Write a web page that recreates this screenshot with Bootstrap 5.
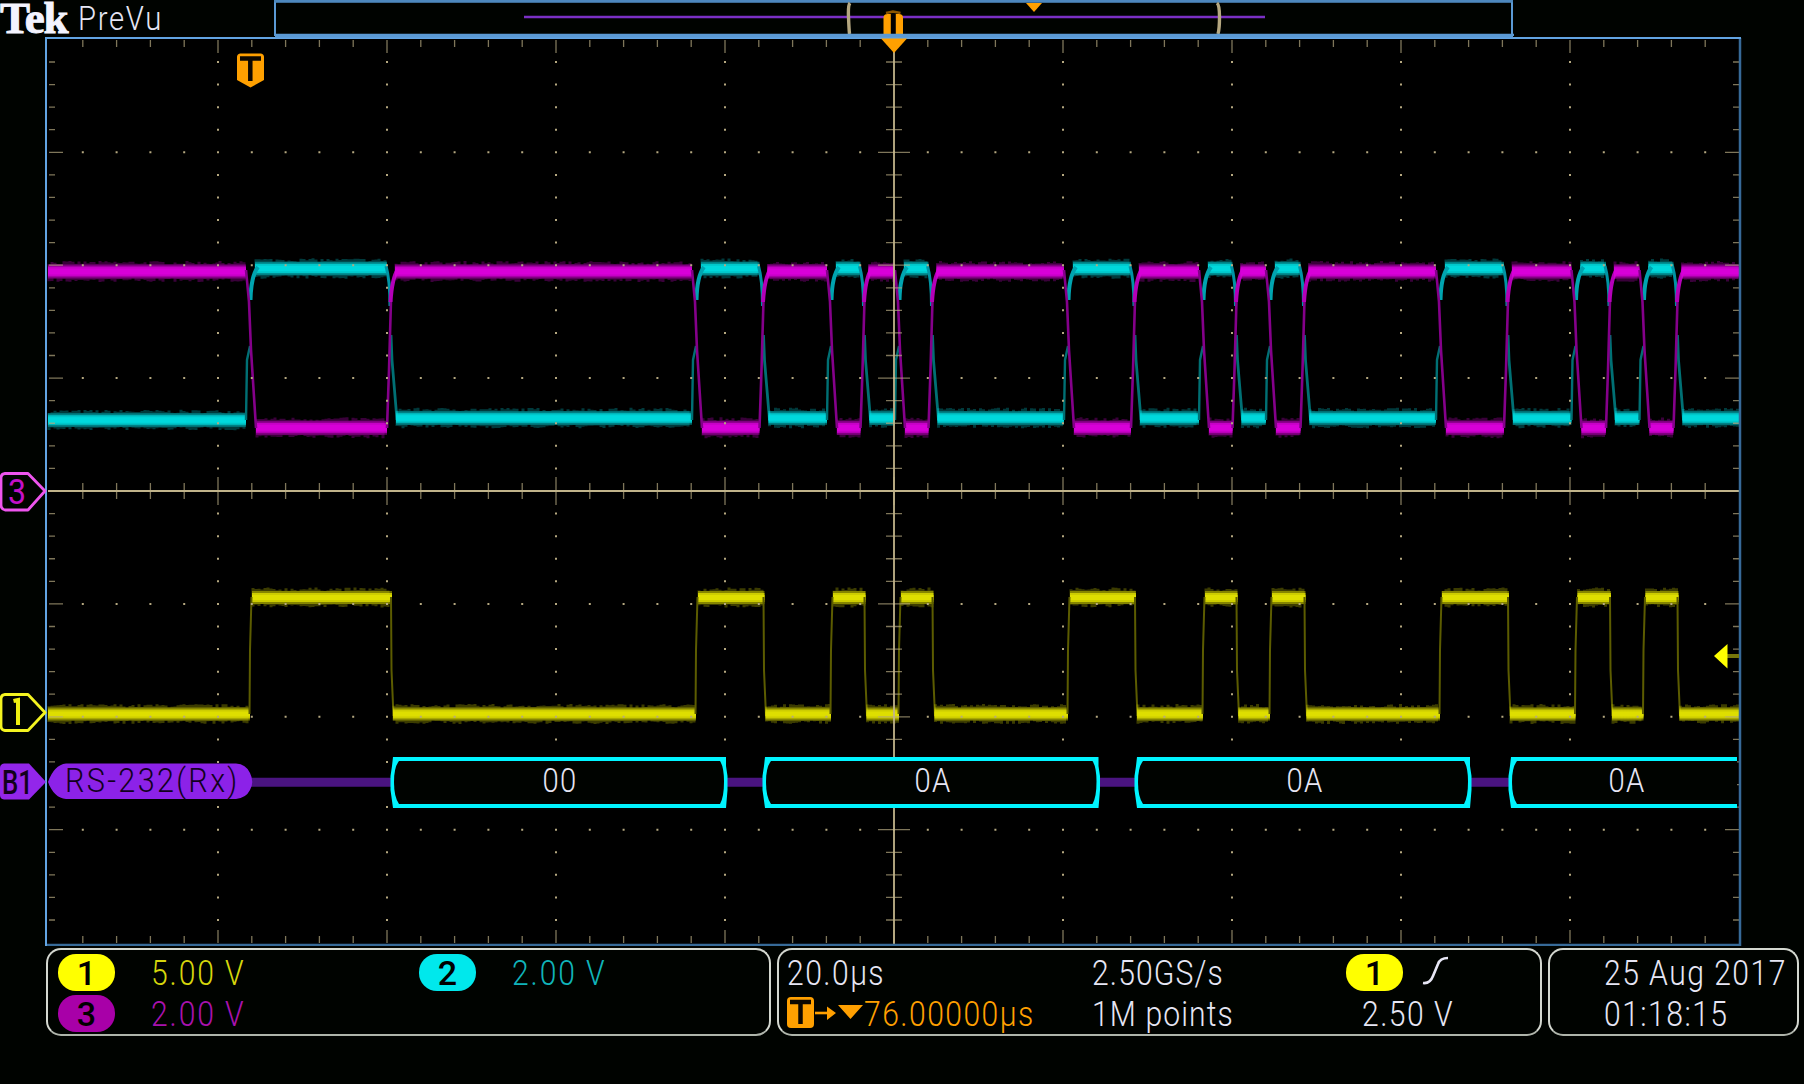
<!DOCTYPE html>
<html lang="en">
<head>
    <meta charset="UTF-8">
    <meta name="viewport" content="width=device-width, initial-scale=1.0">
    <title>Tek PreVu</title>
    <link href="https://cdn.jsdelivr.net/npm/bootstrap@5.3.0/dist/css/bootstrap.min.css" rel="stylesheet">
    <style>
        body { background: #000300; color: #e6e6f4; font-family: Roboto, "Liberation Sans", sans-serif; font-weight: 300; }
        svg { display: block; }
        svg text { font-family: Roboto, "Liberation Sans", sans-serif; }
        .scope { width: 1804px; height: 1084px; }
        .topbar { height: 36px; }
        .brand { width: 78px; font: bold 45px/37px "Liberation Serif", serif; letter-spacing: -1.2px; color: #f4f4ff; -webkit-text-stroke: 1px #f4f4ff; }
        .mode { width: 196px; font-size: 34px; line-height: 36px; }
        .readouts { margin: 2px 4px 0 46px; gap: 6px; height: 88px; }
        .panel { border: 2.5px solid #d4d8d0; border-bottom-color: #aeb4aa; border-radius: 15px; }
        .line { height: 41px; font-size: 35px; line-height: 39px; white-space: pre; }
        /* narrow instrument lettering */
        .lcd { display: inline-block; transform: scaleX(.86); transform-origin: left; letter-spacing: 1.7px; }
        .chan { width: 57px; height: 37px; border-radius: 18px; color: #000; font-weight: 500; font-size: 34px; line-height: 39px; text-align: center; }
        .ch1 { color: #d6d60c; } .ch2 { color: #10b4ba; } .ch3 { color: #a812ae; }
        .bg1 { background: #ffff00; } .bg2 { background: #00e8ec; } .bg3 { background: #a800a8; }
        .p-vert { width: 725px; padding: 4px 0 0 10px; }
        .p-horiz { width: 765px; padding: 4px 0 0 8px; }
        .p-date { width: 251px; padding: 4px 0 0 54px; }
        .slot { width: 361px; }
        .val { margin-left: 36px; letter-spacing: 2.2px; }
        .mode .lcd { letter-spacing: 2px; }
        .c-time { width: 305px; }
        .c-rate { width: 254px; }
        .c-rate .lcd { letter-spacing: 1.3px; }
        .orange { color: #ffa000; }
    </style>
</head>
<body>
<div class="scope d-flex flex-column overflow-hidden">
    <header class="topbar d-flex">
        <div class="brand">Tek</div>
        <div class="mode"><span class="lcd">PreVu</span></div>
        <svg width="1240" height="36" viewBox="274 0 1240 36">
            <rect x="275" y="1.5" width="1237" height="40" fill="#000300" stroke="#5b9ad4" stroke-width="2"/>
            <path d="M274 1.2H1513" stroke="#4d88bd" stroke-width="2.4"/>
            <path d="M524 17H1265" stroke="#7a30c4" stroke-width="2.4"/>
            <path d="M850 3Q848 5 848.500 17T849.500 34M1217 3Q1219.500 5 1219.500 17T1218 34" fill="none" stroke="#b5a880" stroke-width="3.400"/>
            <path d="M1026 3H1042L1034 12Z" fill="#ffa000"/>
            <rect x="883.500" y="14" width="19.500" height="24" rx="4" fill="#ffa000"/>
            <path d="M893.300 14V35" stroke="#000" stroke-width="5"/>
            <path d="M886 13L893 11.500 900.500 13" fill="none" stroke="#8a5600" stroke-width="2.500"/>
            <path d="M274 35H1514" stroke="#5b9ad4" stroke-width="2.4"/>
        </svg>
    </header>

    <svg id="plot" width="1804" height="910" viewBox="0 36 1804 910">
        <rect x="46" y="37.500" width="1693.500" height="907.500" fill="#000"/>
        <g id="traces" fill="none"></g>
        <g id="grid" stroke="#b5a880"></g>
        <path d="M1740 38V945H46" fill="none" stroke="#376a98" stroke-width="2.500"/>
        <path d="M46 946V38H1741" fill="none" stroke="#62a4e2" stroke-width="2"/>
        <path d="M275 36.500H1513" stroke="#5b9ad4" stroke-width="2"/>

        <!-- trigger markers -->
        <path d="M881 38.500H907L894 53Z" fill="#ffa000"/>
        <path d="M240 53.500H261Q264 54 264 57V80L250.500 87.500 237 80V57Q237 54 240 53.500Z" fill="#ffa000"/>
        <path d="M240 58.500H261M250.300 58V81" stroke="#0c0700" stroke-width="4.500"/>
        <path d="M1727 656H1739" stroke="#77770a" stroke-width="4"/>
        <path d="M1714 656L1727.500 644V668.500Z" fill="#ffff00"/>

        <!-- channel handles -->
        <g stroke-width="2.800" stroke-linejoin="round" fill="#000300">
            <path d="M5 473.500H28L45 491 28 510H5Q1 509 1 505V478Q1 474 5 473.500Z" stroke="#ee55ee"/>
            <path d="M5 694.500H28L45 712.500 28 730.500H5Q1 730 1 726V699Q1 695 5 694.500Z" stroke="#f4f420"/>
        </g>
        <path d="M4 763.500H29L46 782 29 799.500H4Q0 799 0 795V768Q0 764 4 763.500Z" fill="#9326ea"/>
        <text x="8" y="504" font-size="35" font-weight="400" textLength="18" lengthAdjust="spacingAndGlyphs" fill="#c410c8">3</text>
        <path d="M13.500 701L18 700V725" stroke="#f0f010" stroke-width="4" fill="none"/>
        <text x="2" y="794" font-size="34" font-weight="500" textLength="31" lengthAdjust="spacingAndGlyphs" fill="#12001c">B1</text>

        <!-- serial bus lane -->
        <path d="M250 782.300H1737" stroke="#4a1480" stroke-width="9"/>
        <path d="M66 763.500H236Q246 764 250 773Q254.500 782 250 790Q246 798 236 799H66Q54 798 48 782Q54 765 66 763.500Z" fill="#8c22e8"/>
        <text transform="translate(65 792) scale(.9 1)" font-size="34" letter-spacing="2.6" fill="#12001e">RS-232(Rx)</text>
        <g id="bus"></g>
    </svg>

    <footer class="readouts d-flex">
        <div class="panel p-vert">
            <div class="line d-flex">
                <div class="slot d-flex flex-shrink-0"><span class="chan bg1">1</span><span class="val ch1 lcd">5.00 V</span></div>
                <div class="d-flex"><span class="chan bg2">2</span><span class="val ch2 lcd">2.00 V</span></div>
            </div>
            <div class="line d-flex">
                <span class="chan bg3">3</span><span class="val ch3 lcd">2.00 V</span>
            </div>
        </div>
        <div class="panel p-horiz">
            <div class="line d-flex">
                <span class="c-time"><span class="lcd">20.0µs</span></span>
                <span class="c-rate"><span class="lcd">2.50GS/s</span></span>
                <span class="chan bg1">1</span>
                <svg width="60" height="41" viewBox="0 0 60 41"><path d="M20 29Q27 30 30 22L35 10Q37 4 45 4" fill="none" stroke="#e6e6f4" stroke-width="2.600"/></svg>
            </div>
            <div class="line d-flex">
                <span class="c-time d-flex orange">
                    <svg class="flex-shrink-0" width="77" height="41" viewBox="0 0 77 41">
                        <rect x="0" y="2" width="27" height="31" rx="4" fill="#ffa000"/>
                        <path d="M3 7H24M13.500 7V29" stroke="#0c0700" stroke-width="4.500"/>
                        <path d="M28 18H42" stroke="#ffa000" stroke-width="2.600"/>
                        <path d="M40 11.500L49 18 40 25Z M51 10H76L63.500 24Z" fill="#ffa000"/>
                    </svg><span class="lcd">76.00000µs</span></span>
                <span class="c-rate"><span class="lcd">1M points</span></span>
                <span class="ms-3"><span class="lcd">2.50 V</span></span>
            </div>
        </div>
        <div class="panel p-date">
            <div class="line"><span class="lcd">25 Aug 2017</span></div>
            <div class="line"><span class="lcd">01:18:15</span></div>
        </div>
    </footer>
</div>

<script>
    const X0 = 49, CX = 894, CY = 491, DX = 33.8, DY = 22.58;

    // graticule: dots on the division lines, ticks on the axes and the frame
    function grid() {
        let dots = '', ticks = '';
        for (let i = -24; i <= 24; i++) {
            const x = CX + i * DX, major = i % 5 === 0;
            const t = major ? 13 : 7;
            ticks += `M${x} 40V${40 + t}M${x} 943V${943 - t}M${x} ${CY - t - 1}V${CY + t + 1}`;
            for (let r = -3; r <= 3; r++) if (r) dots += `M${x - 1} ${CY + r * DY * 5}h2`;
        }
        for (let j = -19; j <= 19; j++) {
            const y = CY + j * DY, major = j % 5 === 0;
            const t = major ? 14 : 6;
            ticks += `M${X0} ${y}h${t}M1739 ${y}h${-t}M${CX - t - 2} ${y}h${2 * t + 4}`;
            for (let c = -4; c <= 4; c++) if (c) dots += `M${CX + c * DX * 5 - 1} ${y}h2`;
        }
        document.getElementById('grid').innerHTML =
            `<path d="${dots}" stroke-width="2"/><path d="${ticks}" stroke-width="1.3" opacity=".7"/>` +
            `<path d="M48 ${CY}H1739M${CX} 44V944" stroke="#c0b38a" stroke-width="1.8"/>`;
    }

    const pulses = [[251, 392], [697, 764.5], [832, 865.5], [900, 933.5], [1069, 1136],
        [1204, 1237.5], [1271, 1305.5], [1441, 1509], [1576.5, 1611], [1644.5, 1678.5]];

    let seed = 7;
    function rnd() { seed = (seed * 16807) % 2147483647; return seed / 2147483647; }

    // noisy horizontal level
    function level(x1, x2, y, color, core) {
        let fuzz = '';
        for (let x = x1 + 1; x < x2 - 1; x += 3) {
            fuzz += `M${x} ${y - core / 2 - 2 - rnd() * 3.5}V${y + core / 2 + 2 + rnd() * 3.5}`;
        }
        return `<path d="M${x1} ${y}H${x2}" stroke="${color}" stroke-width="${core + 4}" opacity=".45"/>` +
            `<path d="${fuzz}" stroke="${color}" stroke-width="3" opacity=".27"/>` +
            `<path d="M${x1} ${y}H${x2}" stroke="${color}" stroke-width="${core}" opacity=".8"/>` +
            `<path d="M${x1} ${y}H${x2}" stroke="${color}" stroke-width="${core - 4}"/>`;
    }
    function edge(d, color, w) { return `<path d="${d}" stroke="${color}" stroke-width="${w || 2}"/>`; }

    function traces() {
        const C = '#00d8dc', M = '#d800d8', Y = '#dede00';
        const cd = '#007074', md = '#84008a', yd = '#5c5c00';
        let s = '', prev = null;
        for (const [t, f] of [...pulses, [1800, 1800]]) {
            const first = prev === null;
            const end = Math.min(t, 1744);
            const lowY = first ? 420 : 418;
            s += level(first ? 48 : prev + 4, end - 5, lowY, C, 9.5);
            s += level(first ? 48 : prev + 3, end - 5, 271.5, M, 10);
            s += level(first ? 48 : prev + 1, t > 1739 ? 1739 : t - 1, 714, Y, 9);
            if (t > 1739) break;
            s += level(t + 4, f - 5, 268.5, C, 9.5);
            s += level(t + 5, f - 5, 427.8, M, 10);
            s += level(t + 1, f, 597.5, Y, 9);
            // rising edge
            s += edge(`M${t - 5} 420L${t - 4} 360L${t - 1} 346`, cd, 2.4);
            s += edge(`M${t - 0.5} 300Q${t} 276 ${t + 7} 267`, '#00a4b0', 4);
            s += edge(`M${t - 5} 270L${t - 2} 302L${t} 350L${t + 5} 428`, md, 2.6);
            s += edge(`M${t - 1.5} 714L${t - 1} 650L${t + 0.5} 597`, yd);
            // falling edge
            s += edge(`M${f - 1} 335L${f} 360L${f + 5} 420`, cd, 2.8);
            s += edge(`M${f - 6} 266Q${f - 2} 280 ${f - 2} 306`, '#0094a4', 3);
            s += edge(`M${f - 5} 428L${f - 3} 370L${f - 1} 300`, md, 2.6);
            s += edge(`M${f - 1.5} 302Q${f} 278 ${f + 6} 269`, '#b400b8', 4);
            s += edge(`M${f - 1} 597L${f - 0.5} 670L${f + 1.5} 716`, yd);
            prev = f;
        }
        document.getElementById('traces').innerHTML = s;
    }

    function bus() {
        const frames = [[393, 726, '00', 560], [765, 1098.5, '0A', 933], [1137, 1470, '0A', 1305], [1511, 1760, '0A', 1627]];
        let s = '';
        for (const [a, b, txt, cx] of frames) {
            const open = b > 1739;
            const right = open ? 'L1737 757V808' : `L${b} 757L${b} 766L${b + 1.5} 776V790L${b} 808`;
            const inner = open ? 'L1737 761V804' : `L${b - 6} 761Q${b - 2} 767 ${b - 2} 782T${b - 6} 804`;
            s += `<path d="M${a} 757${right}L${a} 808L${a - 2.5} 790V776L${a - 1} 766Z" fill="#00f4ff"/>` +
                `<path d="M${a + 6} 761${inner}L${a + 6} 804Q${a + 1} 797 ${a + 1} 782T${a + 6} 761Z" fill="#000300"/>` +
                `<text transform="translate(${cx} 792) scale(.86 1)" text-anchor="middle" font-size="34" letter-spacing="1.5" fill="#e6e6f4">${txt}</text>`;
        }
        document.getElementById('bus').innerHTML = s;
    }

    grid();
    traces();
    bus();
</script>
<script src="https://cdn.jsdelivr.net/npm/bootstrap@5.3.0/dist/js/bootstrap.bundle.min.js"></script>
</body>
</html>
